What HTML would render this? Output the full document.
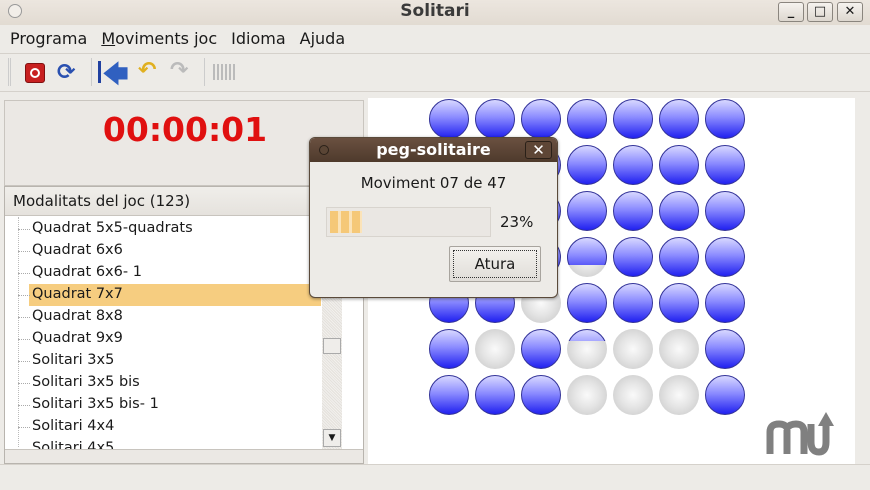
<!DOCTYPE html>
<html><head><meta charset="utf-8"><style>
*{margin:0;padding:0;box-sizing:border-box}
body{width:870px;height:490px;background:#edebe7;font-family:"DejaVu Sans","Liberation Sans",sans-serif;font-size:15px;color:#1a1a1a;position:relative;overflow:hidden}
.a{position:absolute}
.title{left:0;top:0;width:870px;height:25px;background:linear-gradient(#ece6df,#e2dbd2);}
.wb{top:2px;width:26px;height:20px;border:1px solid #8a857e;border-radius:3px;background:linear-gradient(#f6f3ef,#ddd7cf);text-align:center;font-weight:bold;font-size:13px;line-height:18px}
.menu span{margin-right:14px}
.b{border-radius:50%;width:40px;height:40px;position:absolute;border:1px solid #333399;background:linear-gradient(#d8d8ff 0%,#8c8cff 45%,#2020f0 100%)}
.g{border-radius:50%;width:40px;height:40px;position:absolute;background:radial-gradient(circle at 50% 50%,#fafafa 0%,#e4e4e4 45%,#c4c4c4 100%)}
.li{position:absolute;left:32px;font-size:14.5px}
.tk{position:absolute;left:18px;width:12px;border-top:1px dotted #aaa}
</style></head><body>
<div class="a title"></div>
<div class="a" style="left:8px;top:4px;width:14px;height:14px;border:1px solid #999;border-radius:50%;background:#f2eee9"></div>
<div class="a" style="left:0;width:870px;top:1px;text-align:center;font-weight:bold;font-size:17px;color:#3a3a3a">Solitari</div>
<div class="a wb" style="left:778px">_</div>
<div class="a wb" style="left:807px">□</div>
<div class="a wb" style="left:837px">✕</div>
<div class="a menu" style="left:10px;top:29px;font-size:16px"><span>Programa</span><span><u>M</u>oviments joc</span><span>Idioma</span><span>Ajuda</span></div>
<div class="a" style="left:0;top:53px;width:870px;border-top:1px solid #d5d1cb"></div>
<div class="a" style="left:8px;top:58px;width:3px;height:28px;border-left:1px solid #ccc;border-right:1px solid #ccc"></div>
<div class="a" style="left:25px;top:63px;width:20px;height:20px;background:#c82020;border-radius:3px;border:1px solid #801010"><div style="margin:4px auto;width:10px;height:10px;border:2px solid #fff;border-radius:50%"></div></div>
<div class="a" style="left:57px;top:60px;font-size:22px;color:#2a50b0;font-weight:bold">⟳</div>
<div class="a" style="left:91px;top:58px;width:1px;height:28px;background:#ccc"></div>
<div class="a" style="left:98px;top:61px;width:3px;height:22px;background:#2040a0"></div>
<div class="a" style="left:102px;top:56px;font-size:26px;color:#3060c0">🡄</div>
<div class="a" style="left:138px;top:58px;font-size:22px;color:#e0b020;font-weight:bold">↶</div>
<div class="a" style="left:170px;top:58px;font-size:22px;color:#bbb;font-weight:bold">↷</div>
<div class="a" style="left:204px;top:58px;width:1px;height:28px;background:#ccc"></div>
<div class="a" style="left:213px;top:64px;width:22px;height:16px;background:repeating-linear-gradient(90deg,#bbb 0 2px,transparent 2px 4px)"></div>
<div class="a" style="left:0;top:91px;width:870px;border-top:1px solid #d5d1cb"></div>
<div class="a" style="left:4px;top:100px;width:360px;height:86px;border:1px solid #c9c5bf;background:#ebe8e4"></div>
<div class="a" style="left:4px;width:362px;top:110px;text-align:center;color:#e01010;font-weight:bold;font-size:33px">00:00:01</div>
<div class="a" style="left:4px;top:186px;width:360px;height:278px;border:1px solid #b8b4ae;background:#fff"></div>
<div class="a" style="left:5px;top:187px;width:338px;height:29px;background:linear-gradient(#f0eeea,#e5e2dd);border-bottom:1px solid #c8c4be;padding:5px 8px;font-size:15px">Modalitats del joc (123)</div>
<div class="a" style="left:18px;top:217px;height:230px;border-left:1px dotted #bbb"></div>
<div class="a" style="left:29px;top:284px;width:292px;height:22px;background:#f6cd80"></div>
<div class="li" style="top:220px">Quadrat 5x5-quadrats</div><div class="tk" style="top:229px"></div>
<div class="li" style="top:242px">Quadrat 6x6</div><div class="tk" style="top:251px"></div>
<div class="li" style="top:264px">Quadrat 6x6- 1</div><div class="tk" style="top:273px"></div>
<div class="li" style="top:286px">Quadrat 7x7</div><div class="tk" style="top:295px"></div>
<div class="li" style="top:308px">Quadrat 8x8</div><div class="tk" style="top:317px"></div>
<div class="li" style="top:330px">Quadrat 9x9</div><div class="tk" style="top:339px"></div>
<div class="li" style="top:352px">Solitari 3x5</div><div class="tk" style="top:361px"></div>
<div class="li" style="top:374px">Solitari 3x5 bis</div><div class="tk" style="top:383px"></div>
<div class="li" style="top:396px">Solitari 3x5 bis- 1</div><div class="tk" style="top:405px"></div>
<div class="li" style="top:418px">Solitari 4x4</div><div class="tk" style="top:427px"></div>
<div class="a" style="left:5px;top:440px;width:317px;height:9px;overflow:hidden"><div class="li" style="top:0;left:27px">Solitari 4x5</div></div>
<div class="a" style="left:322px;top:217px;width:20px;height:232px;background:repeating-linear-gradient(45deg,#e4e1dc 0 1px,#f2f0ed 1px 2px)"></div>
<div class="a" style="left:323px;top:338px;width:18px;height:16px;border:1px solid #aaa;background:#efedea"></div>
<div class="a" style="left:323px;top:429px;width:18px;height:18px;border:1px solid #aaa;background:#efedea;font-size:9px;text-align:center;line-height:16px">▼</div>
<div class="a" style="left:5px;top:449px;width:358px;height:14px;background:#ebe8e4;border-top:1px solid #c8c4be"></div>
<div class="a" style="left:0;top:464px;width:870px;border-top:1px solid #d5d1cb"></div>
<div class="a" style="left:368px;top:98px;width:487px;height:366px;background:#fff"></div>
<svg class="a" style="left:765px;top:410px" width="72" height="46"><path d="M5 44 V22 Q5 14 14 14 Q20 14 22 18 Q25 14 31 14 Q39 14 39 22 V44" fill="none" stroke="#808080" stroke-width="7"/><path d="M22 20 V44" stroke="#808080" stroke-width="7"/><path d="M46 14 V32 Q46 42 54 42 Q61 42 61 32 V14" fill="none" stroke="#808080" stroke-width="7"/><path d="M61 2 L53 16 H69 Z" fill="#808080"/></svg>
<script>
var s=["bbbbbbb","bbbbbbb","bbbbbbb","bbbhbbb","bbgbbbb","bgbqggb","bbbgggb"],h="";
for(var r=0;r<7;r++)for(var c=0;c<7;c++){var x=429+c*46,y=99+r*46,t=s[r][c];
if(t=="b")h+='<div class="b" style="left:'+x+'px;top:'+y+'px"></div>';
else if(t=="g")h+='<div class="g" style="left:'+x+'px;top:'+y+'px"></div>';
else{var f=t=="h"?28:12;h+='<div class="g" style="left:'+x+'px;top:'+y+'px"></div><div class="a" style="left:'+x+'px;top:'+y+'px;width:40px;height:'+f+'px;overflow:hidden"><div class="b" style="left:0;top:0"></div></div>';}}
document.body.insertAdjacentHTML('beforeend',h);
</script>
<div class="a" style="left:309px;top:137px;width:249px;height:161px;border:1px solid #5a4a3a;border-radius:6px;background:#edebe7;overflow:hidden;box-shadow:0 1px 3px rgba(0,0,0,.4)">
<div style="height:24px;background:linear-gradient(#6a5040,#4e3a2c);color:#fff;font-weight:bold;font-size:16px;text-align:center;line-height:23px">peg-solitaire</div>
<div class="a" style="left:9px;top:7px;width:10px;height:10px;border-radius:50%;border:1px solid #2a2018;background:#5a4535"></div>
<div class="a" style="left:215px;top:3px;width:27px;height:18px;border:1px solid #2a2018;border-radius:3px;color:#fff;font-weight:bold;text-align:center;line-height:16px;background:#5e4636">✕</div>
<div style="text-align:center;margin-top:12px;font-size:15px">Moviment 07 de 47</div>
<div class="a" style="left:16px;top:69px;width:165px;height:30px;border:1px solid #d8d4ce;background:#eae7e3"><div style="margin:3px;width:32px;height:22px;background:repeating-linear-gradient(90deg,#f5c878 0 8px,#fbe3b8 8px 11px)"></div></div>
<div class="a" style="left:190px;top:75px;font-size:15px">23%</div>
<div class="a" style="left:139px;top:108px;width:92px;height:36px;border:1px solid #a8a49e;border-radius:2px;background:linear-gradient(#f4f2ef,#e0ddd8);padding:3px"><div style="border:1px dotted #333;height:28px;text-align:center;line-height:26px;font-size:15px">Atura</div></div>
</div>
</body></html>
